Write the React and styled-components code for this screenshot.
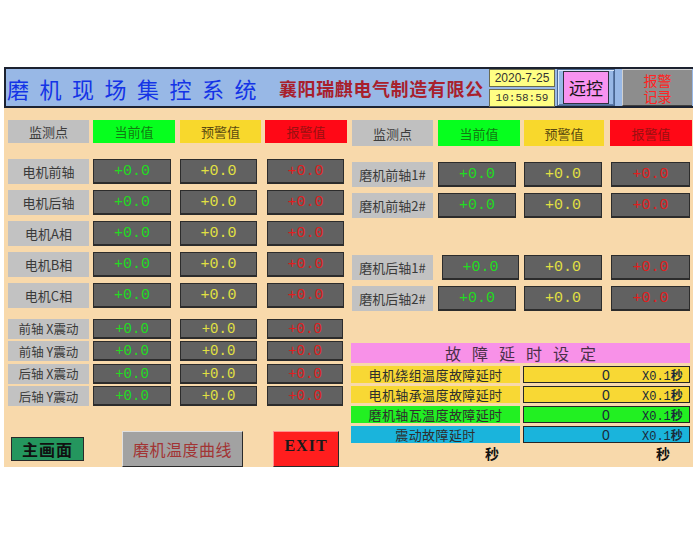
import React from "react";
import styled, { createGlobalStyle } from "styled-components";

const Global = createGlobalStyle`
  html, body { margin: 0; padding: 0; background: #ffffff; }
  body { font-family: "Noto Sans CJK SC", "Noto Sans", sans-serif; }
`;

const CJK = `"Noto Sans CJK SC", "Noto Sans", sans-serif`;
const MONO = `"Liberation Mono", "DejaVu Sans Mono", monospace`;

const Screen = styled.div`
  margin: 67px 0 0 4px;
  width: 689px;
  display: flex;
  flex-direction: column;
`;

const Header = styled.div`
  height: 37px;
  background: #98b8e6;
  border: 2px solid #1c2230;
  border-right: none;
  display: flex;
  align-items: center;
`;

const Title = styled.div`
  font-family: ${CJK};
  font-size: 22px;
  color: #1434e6;
  letter-spacing: 10.5px;
  margin-left: 1px;
  width: 272px;
  white-space: nowrap;
`;

const Company = styled.div`
  font-family: ${CJK};
  font-size: 18px;
  font-weight: 700;
  color: #a8202c;
  width: 210px;
  white-space: nowrap;
  letter-spacing: 0.6px;
`;

const DateStack = styled.div`
  display: flex;
  flex-direction: column;
  gap: 2px;
  width: 66px;
`;

const DateBox = styled.div`
  height: 18px;
  background: #ffff84;
  border: 1px solid #6a6a50;
  box-sizing: border-box;
  display: flex;
  align-items: center;
  justify-content: center;
  color: #333;
  font-family: ${(p) => (p.$mono ? MONO : `"Liberation Sans", Arial, sans-serif`)};
  font-size: ${(p) => (p.$mono ? "11px" : "12px")};
`;

const RemoteFrame = styled.div`
  margin-left: 2px;
  width: 58px;
  height: 37px;
  box-sizing: border-box;
  border: 1px solid #4a6690;
  box-shadow: inset 1px 1px 0 #d8e6fa, inset -1px -1px 0 #5a78a8;
  display: flex;
  align-items: center;
  justify-content: center;
`;

const RemoteButton = styled.div`
  width: 46px;
  height: 33px;
  box-sizing: border-box;
  background: #f893f0;
  border: 1px solid #303040;
  display: flex;
  align-items: center;
  justify-content: center;
  font-family: ${CJK};
  font-size: 17px;
  color: #161616;
`;

const AlarmButton = styled.div`
  margin-left: 7px;
  width: 70px;
  height: 37px;
  box-sizing: border-box;
  background: #8d8d8d;
  border-top: 1px solid #d0d0d0;
  border-left: 1px solid #d0d0d0;
  border-bottom: 1px solid #404040;
  display: flex;
  align-items: center;
  justify-content: center;
  text-align: center;
  font-family: ${CJK};
  font-size: 14px;
  line-height: 16px;
  color: #ff2424;
`;

const Body = styled.div`
  height: 359px;
  background: #f8d9ab;
  overflow: hidden;
  display: flex;
  padding: 12px 0 0 4px;
  box-sizing: border-box;
  gap: 5px;
`;

const Column = styled.div`
  width: ${(p) => p.$w}px;
  display: flex;
  flex-direction: column;
`;

const Grid = styled.div`
  display: grid;
  grid-template-columns: ${(p) => p.$cols};
  height: ${(p) => p.$h}px;
  margin-top: ${(p) => p.$mt || 0}px;
`;

const headTones = {
  label: { bg: "#c0c0c0", fg: "#3c3c3c" },
  cur: { bg: "#06ff1e", fg: "#127a12" },
  pre: { bg: "#f8d82c", fg: "#5a4a10" },
  alarm: { bg: "#ff0816", fg: "#9a1010" },
};

const HeadCell = styled.div`
  width: ${(p) => p.$w}px;
  background: ${(p) => headTones[p.$tone].bg};
  color: ${(p) => headTones[p.$tone].fg};
  font-family: ${CJK};
  font-size: 13px;
  display: flex;
  align-items: center;
  justify-content: center;
`;

const Label = styled.div`
  width: 81px;
  background: #c2c2c2;
  color: #3a3a3a;
  font-family: ${CJK};
  font-size: ${(p) => (p.$small ? 12.5 : 13)}px;
  display: flex;
  align-items: center;
  justify-content: center;
  white-space: pre;
`;

const valueColors = { cur: "#22dc22", pre: "#e2e042", alarm: "#e01e1e" };

const Value = styled.div`
  width: ${(p) => p.$w}px;
  margin-left: ${(p) => p.$ml || 0}px;
  box-sizing: border-box;
  background: #616161;
  border: 1px solid #2c2c2c;
  border-bottom-width: 2px;
  color: ${(p) => valueColors[p.$tone]};
  font-family: ${MONO};
  font-size: ${(p) => (p.$small ? 14 : 15)}px;
  display: flex;
  align-items: center;
  justify-content: center;
  padding-top: 1px;
`;

const Stack = styled.div`
  display: flex;
  flex-direction: column;
  gap: ${(p) => p.$gap}px;
  margin-top: ${(p) => p.$mt || 0}px;
`;

const ButtonRow = styled.div`
  display: flex;
  align-items: flex-start;
  margin-top: 26px;
  margin-left: 3px;
`;

const NavButton = styled.div`
  width: ${(p) => p.$w}px;
  height: ${(p) => p.$h}px;
  margin-left: ${(p) => p.$ml || 0}px;
  margin-top: ${(p) => p.$mt || 0}px;
  box-sizing: border-box;
  background: ${(p) => p.$bg};
  color: ${(p) => p.$fg};
  border: 1px solid #2a2a2a;
  border-top-color: ${(p) => p.$hi || "#2a2a2a"};
  border-left-color: ${(p) => p.$hi || "#2a2a2a"};
  font-family: ${(p) => p.$serif ? `"Liberation Serif", "Times New Roman", serif` : CJK};
  font-weight: ${(p) => (p.$bold ? 700 : 400)};
  font-size: 16px;
  display: flex;
  align-items: ${(p) => (p.$top ? "flex-start" : "center")};
  padding-top: ${(p) => (p.$top ? 5 : 0)}px;
  justify-content: center;
  letter-spacing: ${(p) => p.$ls || 0}px;
`;

const FaultPanel = styled.div`
  margin: 32px 0 0 -1px;
  width: 339px;
  display: flex;
  flex-direction: column;
`;

const FaultHead = styled.div`
  height: 20px;
  background: #f891e8;
  color: #4a3048;
  font-family: ${CJK};
  font-size: 16px;
  letter-spacing: 11px;
  padding-left: 11px;
  display: flex;
  align-items: center;
  justify-content: center;
`;

const faultTones = {
  y: "#f8d834",
  g: "#22f022",
  b: "#1ab4dc",
};

const FaultRow = styled.div`
  display: flex;
  height: 17px;
  margin-top: 3px;
`;

const FaultLabel = styled.div`
  width: 169px;
  background: ${(p) => faultTones[p.$tone]};
  color: #2e2e2e;
  font-family: ${CJK};
  font-size: 13px;
  letter-spacing: 0.4px;
  display: flex;
  align-items: center;
  justify-content: center;
`;

const FaultValue = styled.div`
  margin-left: 3px;
  width: 167px;
  box-sizing: border-box;
  background: ${(p) => faultTones[p.$tone]};
  border: 1px solid #262626;
  display: flex;
  align-items: center;
  color: #1a2a3a;
`;

const Num = styled.span`
  font-family: "Liberation Sans", Arial, sans-serif;
  font-size: 14px;
  margin-left: 78px;
  width: 10px;
`;

const Unit = styled.span`
  margin-left: 30px;
  font-family: ${MONO};
  font-size: 12px;
  white-space: nowrap;
`;

const UnitCJK = styled.span`
  font-family: ${CJK};
  font-size: 12px;
  font-weight: 700;
`;

const SecRow = styled.div`
  display: flex;
  font-family: ${CJK};
  font-size: 14px;
  font-weight: 700;
  color: #111;
`;

const Sec = styled.span`
  margin-left: ${(p) => p.$ml}px;
`;

const LEFT_COLS = "85px 87px 85px 82px";
const RIGHT_COLS = "86px 86px 86px 82px";

function HeadRowBlock({ cols, widths }) {
  return (
    <Grid $cols={cols} $h={26}>
      <HeadCell $tone="label" $w={widths[0]}>监测点</HeadCell>
      <HeadCell $tone="cur" $w={widths[1]}>当前值</HeadCell>
      <HeadCell $tone="pre" $w={widths[2]}>预警值</HeadCell>
      <HeadCell $tone="alarm" $w={widths[3]}>报警值</HeadCell>
    </Grid>
  );
}

function DataRow({ cols, label, vw, h = 25, small, curMl = 0, alarmMl = 0 }) {
  return (
    <Grid $cols={cols} $h={h}>
      <Label $small={small}>{label}</Label>
      <Value $tone="cur" $w={vw[0]} $ml={curMl} $small={small}>+0.0</Value>
      <Value $tone="pre" $w={vw[1]} $small={small}>+0.0</Value>
      <Value $tone="alarm" $w={vw[2]} $ml={alarmMl} $small={small}>+0.0</Value>
    </Grid>
  );
}

const leftRows = ["电机前轴", "电机后轴", "电机A相", "电机B相", "电机C相"];
const vibRows = ["前轴 X震动", "前轴 Y震动", "后轴 X震动", "后轴 Y震动"];
const faults = [
  { label: "电机绕组温度故障延时", tone: "y" },
  { label: "电机轴承温度故障延时", tone: "y" },
  { label: "磨机轴瓦温度故障延时", tone: "g" },
  { label: "震动故障延时", tone: "b" },
];

export default function App() {
  return (
    <>
      <Global />
      <Screen>
        <Header>
          <Title>磨机现场集控系统</Title>
          <Company>襄阳瑞麒电气制造有限公</Company>
          <DateStack>
            <DateBox>2020-7-25</DateBox>
            <DateBox $mono>10:58:59</DateBox>
          </DateStack>
          <RemoteFrame>
            <RemoteButton>远控</RemoteButton>
          </RemoteFrame>
          <AlarmButton>
            报警
            <br />
            记录
          </AlarmButton>
        </Header>
        <Body>
          <Column $w={339}>
            <HeadRowBlock cols={LEFT_COLS} widths={[81, 82, 81, 82]} />
            <Stack $gap={6} $mt={16}>
              {leftRows.map((l) => (
                <DataRow key={l} cols={LEFT_COLS} label={l} vw={[78, 77, 77]} alarmMl={2} />
              ))}
            </Stack>
            <Stack $gap={3.5} $mt={11}>
              {vibRows.map((l) => (
                <DataRow key={l} cols={LEFT_COLS} label={l} vw={[78, 77, 76]} h={19} small alarmMl={2} />
              ))}
            </Stack>
            <ButtonRow>
              <NavButton $w={73} $h={24} $mt={6} $bg="#24965e" $fg="#101010" $bold $ls={1}>主画面</NavButton>
              <NavButton $w={121} $h={36} $ml={38} $bg="#a2a2a2" $fg="#a23434" $hi="#e0e0e0" $top $ls={0.5}>磨机温度曲线</NavButton>
              <NavButton $w={66} $h={36} $ml={30} $bg="#ff1e1e" $fg="#1a1a1a" $hi="#ff9090" $serif $bold $top $ls={1}>EXIT</NavButton>
            </ButtonRow>
          </Column>
          <Column $w={340}>
            <HeadRowBlock cols={RIGHT_COLS} widths={[81, 82, 80, 82]} />
            <Stack $gap={6} $mt={16}>
              <DataRow cols={RIGHT_COLS} label="磨机前轴1#" vw={[78, 78, 79]} alarmMl={1} />
              <DataRow cols={RIGHT_COLS} label="磨机前轴2#" vw={[78, 78, 79]} alarmMl={1} />
              <Grid $cols={RIGHT_COLS} $h={25} />
              <DataRow cols={RIGHT_COLS} label="磨机后轴1#" vw={[77, 78, 79]} curMl={4} alarmMl={1} />
              <DataRow cols={RIGHT_COLS} label="磨机后轴2#" vw={[78, 78, 79]} alarmMl={1} />
            </Stack>
            <FaultPanel>
              <FaultHead>故障延时设定</FaultHead>
              {faults.map((f) => (
                <FaultRow key={f.label}>
                  <FaultLabel $tone={f.tone}>{f.label}</FaultLabel>
                  <FaultValue $tone={f.tone}>
                    <Num>0</Num>
                    <Unit>
                      X0.1<UnitCJK>秒</UnitCJK>
                    </Unit>
                  </FaultValue>
                </FaultRow>
              ))}
              <SecRow>
                <Sec $ml={134}>秒</Sec>
                <Sec $ml={157}>秒</Sec>
              </SecRow>
            </FaultPanel>
          </Column>
        </Body>
      </Screen>
    </>
  );
}
